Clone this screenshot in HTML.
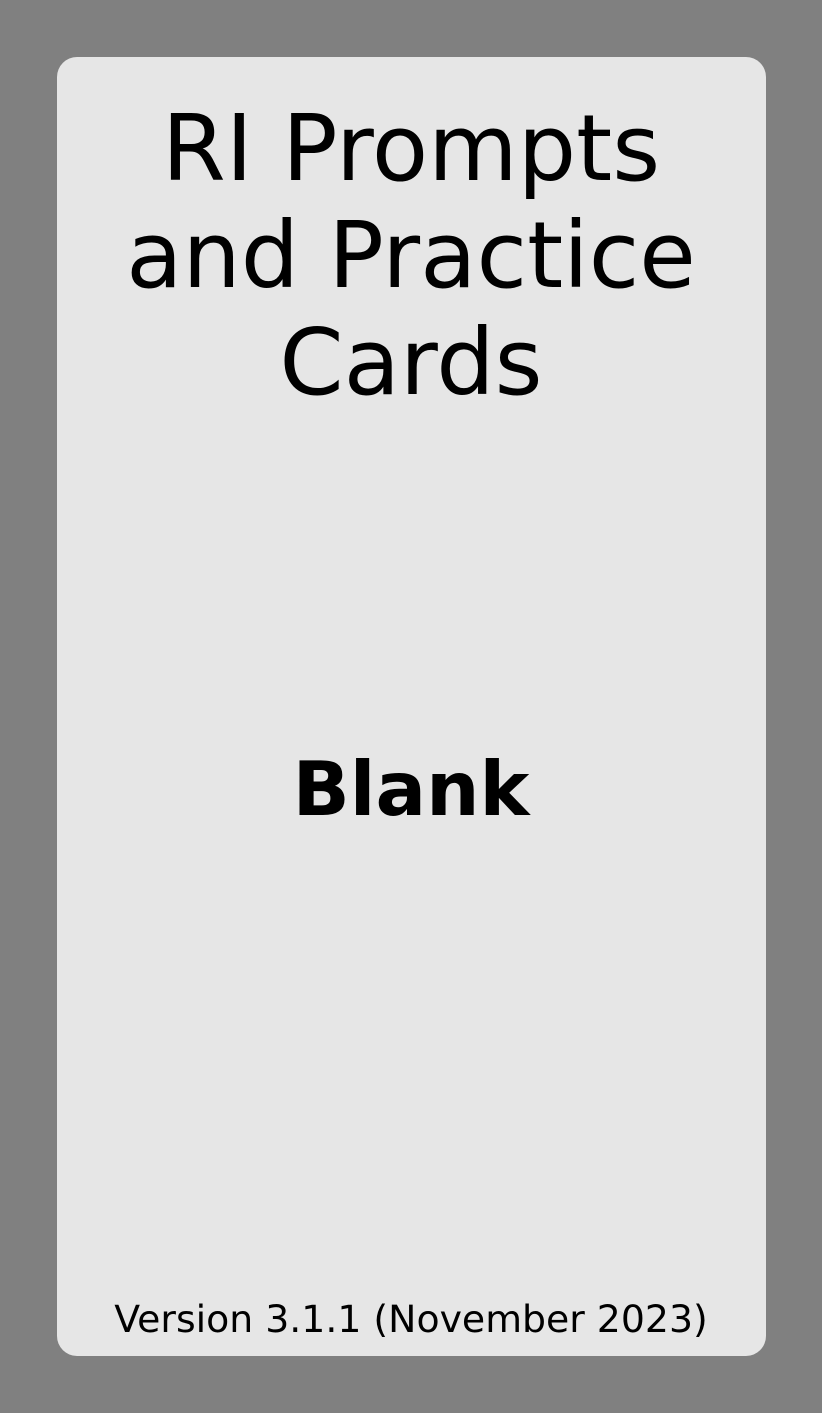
<!DOCTYPE html>
<html><head><meta charset="utf-8"><style>
html,body{margin:0;padding:0;width:822px;height:1413px;background:#808080;overflow:hidden;font-family:"DejaVu Sans","Liberation Sans",sans-serif;}
.card{position:absolute;left:57px;top:57px;width:709px;height:1299px;background:#e6e6e6;border-radius:20px;}
.t{position:absolute;left:0;width:822px;text-align:center;color:#000;white-space:nowrap;}
</style></head><body>
<div class="card"></div>
<div class="t" style="top:95px;font-size:92px;line-height:107px;">RI Prompts<br>and Practice<br>Cards</div>
<div class="t" style="top:744px;font-size:75px;line-height:90px;font-weight:bold;">Blank</div>
<div class="t" style="top:1297px;font-size:37.8px;line-height:44px;">Version 3.1.1 (November 2023)</div>
</body></html>
